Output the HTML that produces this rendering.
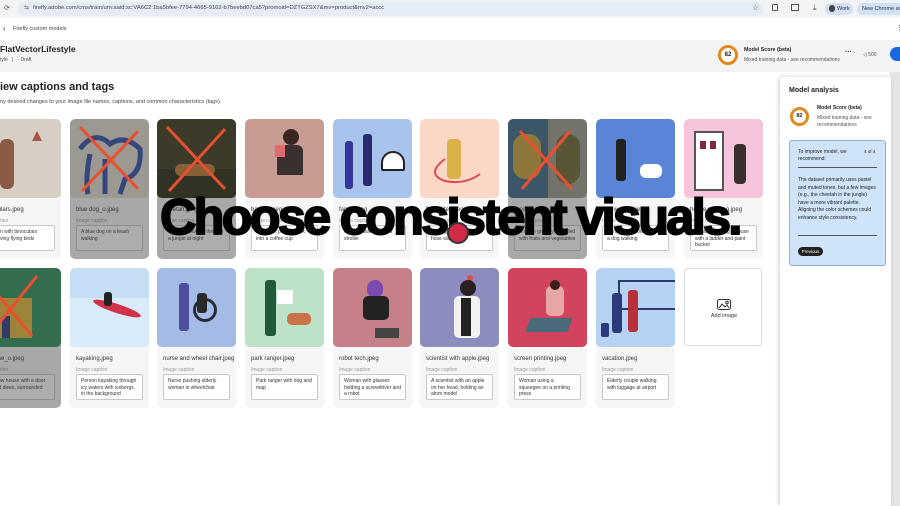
<!DOCTYPE html>
<html><head><meta charset="utf-8"><style>
*{box-sizing:border-box;margin:0;padding:0}
body{width:900px;height:506px;overflow:hidden;background:#fff;font-family:"Liberation Sans",sans-serif;position:relative;color:#222}
.a{position:absolute}
.card{position:absolute;width:79px;height:140px;background:#f6f6f6;border-radius:5px;overflow:hidden}
.img{position:absolute;left:0;top:0;width:79px;height:79px;border-radius:5px;overflow:hidden}
.fn{position:absolute;left:6px;top:88px;font-size:6px;color:#333;white-space:nowrap}
.ic{position:absolute;left:6px;top:99px;font-size:5px;color:#999}
.tb{position:absolute;left:6px;top:106px;width:67px;height:26px;background:#fff;border:1px solid #c8c8c8;border-radius:2px;font-size:5px;line-height:6.5px;padding:3px 4px;color:#333}
.ov{position:absolute;left:0;top:0;width:100%;height:100%;background:rgba(60,60,60,.42);border-radius:5px}
.x{position:absolute;left:0;top:0}
</style></head><body>
<div class="a" style="left:0;top:0;width:900px;height:18px;background:#f1f3f4"></div>
<div class="a" style="left:18px;top:2px;width:745px;height:14px;background:#e6ecf5;border-radius:7px"></div>
<div class="a" style="left:4px;top:4px;font-size:7px;color:#555">⟳</div>
<div class="a" style="left:24px;top:4px;font-size:6px;color:#666">⇆</div>
<div class="a" style="left:33px;top:5px;font-size:5.8px;color:#444;white-space:nowrap">firefly.adobe.com/cms/train/urn:aaid:sc:VA6C2:1ba5bfee-7794-4665-9162-b7beebd07ca5?promoid=DZTGZSX7&amp;mv=product&amp;mv2=accc</div>
<div class="a" style="left:752px;top:3px;font-size:8px;color:#555">☆</div>
<div class="a" style="left:772px;top:4px;width:6px;height:7px;border:1px solid #555;border-radius:1px"></div>
<div class="a" style="left:791px;top:4px;width:8px;height:7px;border:1px solid #555"></div>
<div class="a" style="left:813px;top:3px;font-size:8px;color:#555">⤓</div>
<div class="a" style="left:825px;top:3px;width:28px;height:12px;background:#d3e0f5;border-radius:6px;font-size:5.5px;padding:3px 0 0 12px;color:#333">Work</div>
<div class="a" style="left:829px;top:5px;width:6px;height:7px;background:#444;border-radius:3px"></div>
<div class="a" style="left:857px;top:3px;width:50px;height:12px;background:#d3e0f5;border-radius:6px;font-size:5.5px;padding:3px 0 0 5px;color:#234;white-space:nowrap">New Chrome av</div>
<div class="a" style="left:3px;top:24px;font-size:8px;color:#333">‹</div>
<div class="a" style="left:13px;top:26px;font-size:5.5px;color:#444">Firefly custom models</div>
<div class="a" style="left:896px;top:24px;font-size:7px;color:#444">⋮</div>
<div class="a" style="left:0;top:40px;width:900px;height:32px;background:#f4f4f4"></div>
<div class="a" style="left:0;top:44px;font-size:8.5px;font-weight:bold;color:#222">FlatVectorLifestyle</div>
<div class="a" style="left:0;top:57px;font-size:5px;color:#555">tyle &nbsp;&nbsp;|&nbsp;&nbsp; ◦ Draft</div>
<div class="a" style="left:718px;top:45px;width:20px;height:20px;border-radius:50%;border:3px solid #e08a1e;background:#fff;font-size:6px;font-weight:bold;text-align:center;line-height:14px">82</div>
<div class="a" style="left:744px;top:47px;font-size:5.3px;font-weight:bold">Model Score (beta)</div>
<div class="a" style="left:744px;top:57px;font-size:5px;color:#555;white-space:nowrap">Mixed training data - see recommendations</div>
<div class="a" style="left:845px;top:49px;font-size:7px;font-weight:bold">···</div>
<div class="a" style="left:863px;top:52px;font-size:5px;color:#555">◁ 500</div>
<div class="a" style="left:890px;top:47px;width:16px;height:14px;background:#1668e3;border-radius:7px"></div>
<div class="a" style="left:0;top:81px;font-size:11px;font-weight:bold;color:#222">iew captions and tags</div>
<div class="a" style="left:0;top:99px;font-size:5.5px;color:#444;white-space:nowrap">ny desired changes to your image file names, captions, and common characteristics (tags).</div>

<div class="card" style="left:-18px;top:119px"><div class="img" style="background:#d8cfc4"><div class="a" style="left:18px;top:20px;width:14px;height:50px;background:#8a5a44;border-radius:6px"></div><div class="a" style="left:50px;top:12px;width:0;height:0;border-left:5px solid transparent;border-right:5px solid transparent;border-bottom:10px solid #a8504a"></div></div>
<div class="fn">noculars.jpeg</div><div class="ic">e caption</div><div class="tb">rson with binoculars serving flying birds</div></div>

<div class="card" style="left:70px;top:119px"><div class="img" style="background:#e2dbd1"><svg width="79" height="79" class="x"><path d="M10 30 Q25 10 40 25 Q55 15 70 30 Q72 55 55 60 L50 75 M20 35 Q15 60 18 75 M35 40 L35 75" stroke="#2f4fa8" stroke-width="5" fill="none"/></svg></div>
<div class="fn">blue dog_o.jpeg</div><div class="ic">Image caption</div><div class="tb">A blue dog on a leash walking</div>
<div class="ov"></div><svg width="79" height="79" class="x"><path d="M10 8 L68 70 M68 12 L12 72" stroke="#e8502f" stroke-width="3"/></svg></div>

<div class="card" style="left:157px;top:119px"><div class="img" style="background:#3d3a1c"><div class="a" style="left:0;top:50px;width:79px;height:29px;background:#2a2c14"></div><div class="a" style="left:18px;top:45px;width:40px;height:12px;background:#c07a35;border-radius:6px"></div></div>
<div class="fn">cheetah.jpeg</div><div class="ic">Image caption</div><div class="tb">Cheetah walking through a jungle at night</div>
<div class="ov"></div><svg width="79" height="79" class="x"><path d="M10 8 L68 70 M68 10 L12 72" stroke="#e8502f" stroke-width="3"/></svg></div>

<div class="card" style="left:245px;top:119px"><div class="img" style="background:#c89c92"><div class="a" style="left:38px;top:10px;width:16px;height:16px;background:#3a2620;border-radius:50%"></div><div class="a" style="left:32px;top:26px;width:26px;height:30px;background:#3b3030;border-radius:6px 6px 0 0"></div><div class="a" style="left:30px;top:26px;width:10px;height:12px;background:#e16c6e"></div></div>
<div class="fn">barista.jpeg</div><div class="ic">Image caption</div><div class="tb">A woman pouring milk into a coffee cup</div></div>

<div class="card" style="left:333px;top:119px"><div class="img" style="background:#a8c3ec"><div class="a" style="left:12px;top:22px;width:8px;height:48px;background:#35359c;border-radius:3px"></div><div class="a" style="left:30px;top:15px;width:9px;height:52px;background:#2a2a70;border-radius:3px"></div><div class="a" style="left:48px;top:32px;width:24px;height:20px;border:2px solid #222;border-radius:12px 12px 2px 2px;background:#fff"></div></div>
<div class="fn">family.jpeg</div><div class="ic">Image caption</div><div class="tb">Couple walking with a stroller</div></div>

<div class="card" style="left:420px;top:119px"><div class="img" style="background:#fbd7c6"><div class="a" style="left:27px;top:20px;width:14px;height:40px;background:#d9b24a;border-radius:4px"></div><svg width="79" height="79" class="x"><path d="M25 40 Q5 55 25 62 Q45 66 60 55" stroke="#d84a54" stroke-width="2" fill="none"/></svg></div>
<div class="fn">firefighter.jpeg</div><div class="ic">Image caption</div><div class="tb">A firefighter holding a hose water</div></div>

<div class="card" style="left:508px;top:119px"><div class="img" style="background:#9c9c8e"><div class="a" style="left:0;top:0;width:40px;height:79px;background:#3b6a8a"></div><div class="a" style="left:5px;top:15px;width:28px;height:45px;background:#c9a23a;border-radius:12px"></div><div class="a" style="left:48px;top:15px;width:24px;height:50px;background:#6d6a34;border-radius:12px"></div></div>
<div class="fn">grocery.jpeg</div><div class="ic">Image caption</div><div class="tb">A mesh grocery bag filled with fruits and vegetables</div>
<div class="ov"></div><svg width="79" height="79" class="x"><path d="M12 12 L64 70 M62 12 L14 70" stroke="#e8502f" stroke-width="3"/></svg></div>

<div class="card" style="left:596px;top:119px"><div class="img" style="background:#5a84d5"><div class="a" style="left:20px;top:20px;width:10px;height:42px;background:#222;border-radius:3px"></div><div class="a" style="left:44px;top:45px;width:22px;height:14px;background:#fff;border-radius:6px"></div></div>
<div class="fn">dog walker.jpeg</div><div class="ic">Image caption</div><div class="tb">Person with poles taking a dog walking</div></div>

<div class="card" style="left:684px;top:119px"><div class="img" style="background:#f7c5db"><div class="a" style="left:10px;top:12px;width:30px;height:60px;background:#fff;border:2px solid #555"></div><div class="a" style="left:16px;top:22px;width:6px;height:8px;background:#7a2a3a"></div><div class="a" style="left:26px;top:22px;width:6px;height:8px;background:#7a2a3a"></div><div class="a" style="left:50px;top:25px;width:12px;height:40px;background:#3a3030;border-radius:4px"></div></div>
<div class="fn">house painting.jpeg</div><div class="ic">Image caption</div><div class="tb">Person painting a house with a ladder and paint bucket</div></div>

<div class="card" style="left:-18px;top:268px"><div class="img" style="background:#2f8f5c"><div class="a" style="left:5px;top:30px;width:45px;height:40px;background:#e3b83a"></div><div class="a" style="left:20px;top:48px;width:8px;height:22px;background:#2a3a8a"></div></div>
<div class="fn">house_o.jpeg</div><div class="ic">e caption</div><div class="tb">ellow house with e door and dows, surrounded</div>
<div class="ov"></div><svg width="79" height="79" class="x"><path d="M2 10 L50 68 M55 8 L5 70" stroke="#e8502f" stroke-width="3"/></svg></div>

<div class="card" style="left:70px;top:268px"><div class="img" style="background:#c6ddf6"><div class="a" style="left:0;top:30px;width:79px;height:49px;background:#d9eaf9"></div><div class="a" style="left:22px;top:36px;width:50px;height:9px;background:#d2314a;border-radius:50%;transform:rotate(18deg)"></div><div class="a" style="left:34px;top:24px;width:8px;height:14px;background:#222;border-radius:3px"></div></div>
<div class="fn">kayaking.jpeg</div><div class="ic">Image caption</div><div class="tb">Person kayaking through icy waters with icebergs in the background</div></div>

<div class="card" style="left:157px;top:268px"><div class="img" style="background:#a4bbe6"><div class="a" style="left:22px;top:15px;width:10px;height:48px;background:#4c4fa0;border-radius:3px"></div><div class="a" style="left:36px;top:30px;width:24px;height:24px;border:3px solid #2a2a3a;border-radius:50%"></div><div class="a" style="left:40px;top:25px;width:10px;height:20px;background:#2a2a2a;border-radius:3px"></div></div>
<div class="fn">nurse and wheel chair.jpeg</div><div class="ic">Image caption</div><div class="tb">Nurse pushing elderly woman in wheelchair</div></div>

<div class="card" style="left:245px;top:268px"><div class="img" style="background:#bce3c8"><div class="a" style="left:20px;top:12px;width:11px;height:56px;background:#1f5a3a;border-radius:3px"></div><div class="a" style="left:42px;top:45px;width:24px;height:12px;background:#c87448;border-radius:5px"></div><div class="a" style="left:32px;top:22px;width:16px;height:14px;background:#fff"></div></div>
<div class="fn">park ranger.jpeg</div><div class="ic">Image caption</div><div class="tb">Park ranger with dog and map</div></div>

<div class="card" style="left:333px;top:268px"><div class="img" style="background:#c6808a"><div class="a" style="left:34px;top:12px;width:16px;height:18px;background:#7a4ab0;border-radius:8px"></div><div class="a" style="left:30px;top:28px;width:26px;height:24px;background:#222;border-radius:5px"></div><div class="a" style="left:42px;top:60px;width:24px;height:10px;background:#444"></div></div>
<div class="fn">robot tech.jpeg</div><div class="ic">Image caption</div><div class="tb">Woman with glasses holding a screwdriver and a robot</div></div>

<div class="card" style="left:420px;top:268px"><div class="img" style="background:#8d8cbf"><div class="a" style="left:47px;top:7px;width:6px;height:6px;background:#e04a4a;border-radius:50%"></div><div class="a" style="left:40px;top:12px;width:16px;height:16px;background:#2a2020;border-radius:8px"></div><div class="a" style="left:34px;top:28px;width:26px;height:42px;background:#f2f2f2;border-radius:5px"></div><div class="a" style="left:41px;top:30px;width:10px;height:38px;background:#222"></div></div>
<div class="fn">scientist with apple.jpeg</div><div class="ic">Image caption</div><div class="tb">A scientist with an apple on her head, holding an atom model</div></div>

<div class="card" style="left:508px;top:268px"><div class="img" style="background:#d2435d"><div class="a" style="left:20px;top:50px;width:42px;height:14px;background:#4a6a7a;transform:skewX(-20deg)"></div><div class="a" style="left:38px;top:18px;width:18px;height:30px;background:#e7a5a5;border-radius:5px"></div><div class="a" style="left:42px;top:12px;width:10px;height:10px;background:#3a2020;border-radius:50%"></div></div>
<div class="fn">screen printing.jpeg</div><div class="ic">Image caption</div><div class="tb">Woman using a squeegee on a printing press</div></div>

<div class="card" style="left:596px;top:268px"><div class="img" style="background:#b5d2f3"><div class="a" style="left:22px;top:12px;width:57px;height:30px;border:2px solid #2a3a6a;border-right:none"></div><div class="a" style="left:16px;top:25px;width:10px;height:40px;background:#2a3a7a;border-radius:3px"></div><div class="a" style="left:32px;top:22px;width:10px;height:42px;background:#b8303a;border-radius:3px"></div><div class="a" style="left:5px;top:55px;width:8px;height:14px;background:#2a3a7a;border-radius:2px"></div></div>
<div class="fn">vacation.jpeg</div><div class="ic">Image caption</div><div class="tb">Elderly couple walking with luggage at airport</div></div>

<div class="a" style="left:684px;top:268px;width:78px;height:78px;background:#fff;border:1px solid #ddd;border-radius:4px">
<svg class="x" style="left:31px;top:28px" width="16" height="14"><rect x="1.5" y="2.5" width="13" height="10" rx="2" fill="none" stroke="#333"/><path d="M3 11 L6 7 L9 10 L11 8 L13 11" stroke="#333" fill="none"/><circle cx="11" cy="5.5" r="1.3" fill="none" stroke="#333"/></svg>
<div class="a" style="left:0;top:44px;width:78px;text-align:center;font-size:5.5px;color:#333">Add image</div></div>

<div class="a" style="left:890px;top:72px;width:10px;height:434px;background:#e4e4e4"></div>
<div class="a" style="left:780px;top:77px;width:111px;height:429px;background:#fff;box-shadow:-1px 0 4px rgba(0,0,0,.2);border-radius:3px 0 0 0"></div>
<div class="a" style="left:789px;top:87px;font-size:7px;font-weight:bold">Model analysis</div>
<div class="a" style="left:790px;top:107px;width:19px;height:19px;border-radius:50%;border:3px solid #e08a1e;font-size:5.5px;font-weight:bold;text-align:center;line-height:13px">82</div>
<div class="a" style="left:817px;top:105px;font-size:5px;font-weight:bold">Model Score (beta)</div>
<div class="a" style="left:817px;top:115px;width:65px;font-size:5px;line-height:7px;color:#555">Mixed training data - see recommendations</div>
<div class="a" style="left:789px;top:140px;width:97px;height:126px;background:#cfe4f9;border:1px solid #8ab0d8;border-radius:3px"></div>
<div class="a" style="left:798px;top:149px;width:60px;font-size:5px;line-height:7px">To improve model, we recommend:</div>
<div class="a" style="left:864px;top:149px;font-size:4.5px">4 of 4</div>
<div class="a" style="left:798px;top:167px;width:79px;height:1px;background:#555"></div>
<div class="a" style="left:798px;top:177px;width:80px;font-size:5px;line-height:7.5px">The dataset primarily uses pastel and muted tones, but a few images (e.g., the cheetah in the jungle) have a more vibrant palette. Aligning the color schemes could enhance style consistency.</div>
<div class="a" style="left:798px;top:235px;width:79px;height:1px;background:#555"></div>
<div class="a" style="left:798px;top:247px;width:25px;height:9px;background:#222;border-radius:5px;color:#fff;font-size:4.5px;text-align:center;line-height:9px">Previous</div>

<div class="a" style="left:0;top:187px;width:900px;text-align:center;font-size:50px;font-weight:900;letter-spacing:-2.5px;color:#000;line-height:60px;-webkit-text-stroke:2px #000">Choose consistent visuals.</div>
<div class="a" style="left:447px;top:222px;width:22px;height:22px;border-radius:50%;background:#d42a4a;border:2px solid #333"></div>
</body></html>
